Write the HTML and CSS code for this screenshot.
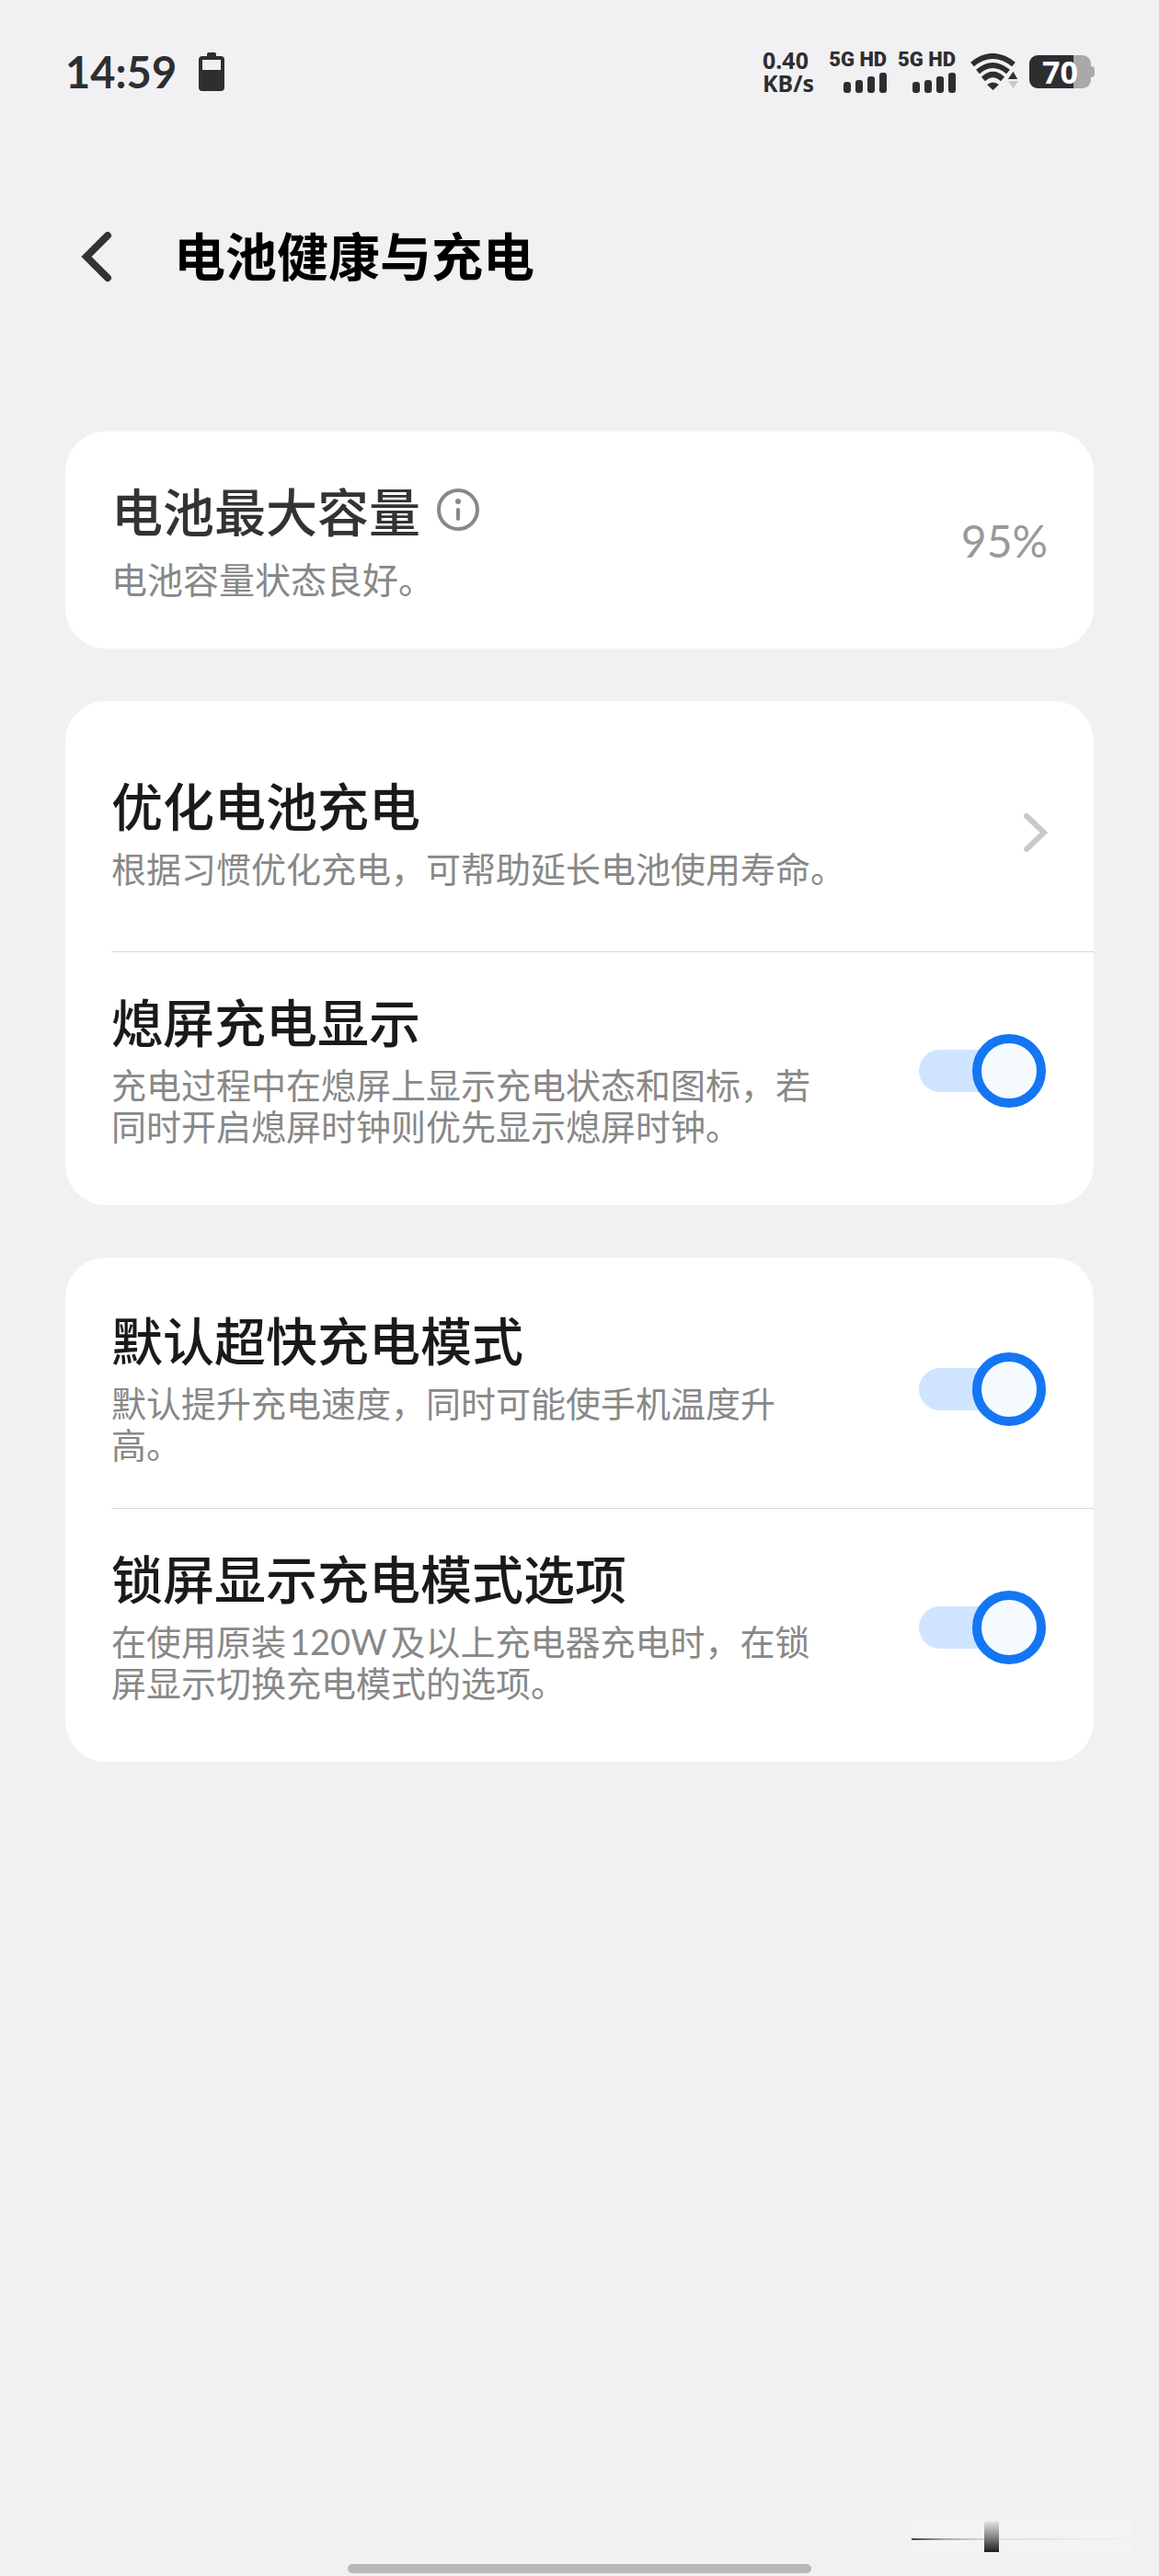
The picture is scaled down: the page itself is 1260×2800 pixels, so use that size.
FILE: index.html
```html
<!DOCTYPE html>
<html lang="zh-CN">
<head>
    <meta charset="UTF-8">
    <meta name="viewport" content="width=device-width, initial-scale=1.0">
    <title>电池健康与充电</title>
    <link rel="stylesheet" href="styles.css">
</head>
<body>
    <div class="screen">
        <div class="status-bar">
            <span class="clock">14:59</span>
            <svg class="charge-icon" width="28" height="42" viewBox="0 0 28 42" aria-hidden="true">
                <path fill="#2e2e30" fill-rule="evenodd" d="M9 4V2Q9 0 11 0H17Q19 0 19 2V4H24Q28 4 28 8V38Q28 42 24 42H4Q0 42 0 38V8Q0 4 4 4ZM4 8V19H24V8Z"/>
            </svg>
            <div class="net-speed"><span>0.40</span><span>KB/s</span></div>
            <div class="sim">
                <span>5G HD</span>
                <svg width="47" height="22" viewBox="0 0 47 22" fill="#2e2e30" aria-hidden="true">
                    <rect x="0" y="10" width="8" height="12" rx="3"/>
                    <rect x="13" y="8" width="8" height="14" rx="3"/>
                    <rect x="26" y="4" width="8" height="18" rx="3"/>
                    <rect x="39" y="0" width="8" height="22" rx="3"/>
                </svg>
            </div>
            <div class="sim">
                <span>5G HD</span>
                <svg width="47" height="22" viewBox="0 0 47 22" fill="#2e2e30" aria-hidden="true">
                    <rect x="0" y="10" width="8" height="12" rx="3"/>
                    <rect x="13" y="8" width="8" height="14" rx="3"/>
                    <rect x="26" y="4" width="8" height="18" rx="3"/>
                    <rect x="39" y="0" width="8" height="22" rx="3"/>
                </svg>
            </div>
            <svg class="wifi" width="52" height="40" viewBox="0 0 52 40" aria-hidden="true">
                <g fill="none" stroke="#2e2e30" stroke-width="6">
                    <path d="M2 12Q24 -6 47 12"/>
                    <path d="M8 20Q24 6 41 20"/>
                    <path d="M14 28Q24.500 18 35 28"/>
                </g>
                <path fill="#2e2e30" d="M18 34Q24.500 29 31 34L24.500 40Z"/>
                <path fill="#2e2e30" stroke="#f1f1f3" stroke-width="1" d="M40 28.500L46.500 19L52 28.500Z"/>
                <path fill="#c9c9cb" d="M41 30H52L46.500 38.500Z"/>
            </svg>
            <div class="battery"><span>70</span></div>
        </div>

        <header class="page-header">
            <button class="back" type="button" aria-label="返回">
                <svg width="34" height="54" viewBox="0 0 34 54" fill="none" stroke="#333335" stroke-width="8" aria-hidden="true">
                    <path stroke-linejoin="miter" stroke-linecap="round" d="M29 4L6 27L29 50"/>
                </svg>
            </button>
            <h1>电池健康与充电</h1>
        </header>

        <main class="cards">
            <section class="card">
                <div class="row capacity">
                    <div class="text">
                        <h2>电池最大容量
                            <svg width="46" height="46" viewBox="0 0 46 46" aria-hidden="true">
                                <circle cx="23" cy="23" r="21" fill="none" stroke="#888" stroke-width="4"/>
                                <circle cx="23" cy="14" r="3" fill="#888"/>
                                <path stroke="#888" stroke-width="4" stroke-linecap="round" d="M23 23V33"/>
                            </svg>
                        </h2>
                        <p>电池容量状态良好。</p>
                    </div>
                    <span class="value">95%</span>
                </div>
            </section>

            <section class="card">
                <a class="row link" href="#optimize">
                    <div class="text">
                        <h2>优化电池充电</h2>
                        <p>根据习惯优化充电，可帮助延长电池使用寿命。</p>
                    </div>
                    <svg width="26" height="42" viewBox="0 0 26 42" fill="none" stroke="#c9c9c9" stroke-width="6" stroke-linecap="round" aria-hidden="true">
                        <path d="M3 3L22 21L3 39"/>
                    </svg>
                </a>
                <label class="row" for="aod">
                    <div class="text">
                        <h2>熄屏充电显示</h2>
                        <p>充电过程中在熄屏上显示充电状态和图标，若同时开启熄屏时钟则优先显示熄屏时钟。</p>
                    </div>
                    <input class="switch" type="checkbox" id="aod" checked>
                </label>
            </section>

            <section class="card">
                <label class="row fast" for="fast">
                    <div class="text">
                        <h2>默认超快充电模式</h2>
                        <p>默认提升充电速度，同时可能使手机温度升高。</p>
                    </div>
                    <input class="switch" type="checkbox" id="fast" checked>
                </label>
                <label class="row" for="lock">
                    <div class="text">
                        <h2>锁屏显示充电模式选项</h2>
                        <p>在使用原装<span class="watt">120W</span>及以上充电器充电时，在锁屏显示切换充电模式的选项。</p>
                    </div>
                    <input class="switch" type="checkbox" id="lock" checked>
                </label>
            </section>
        </main>

        <footer class="bottom">
            <svg class="mark" width="240" height="38" viewBox="0 0 240 38" aria-hidden="true">
                <defs>
                    <linearGradient id="fadeX">
                        <stop offset="0" stop-color="#444"/>
                        <stop offset="0.150" stop-color="#a8a8a8"/>
                        <stop offset="0.350" stop-color="#dededf"/>
                        <stop offset="1" stop-color="#f1f1f3"/>
                    </linearGradient>
                    <linearGradient id="fadeY" x2="0" y2="1">
                        <stop offset="0" stop-color="#e6e6e6"/>
                        <stop offset="0.500" stop-color="#888"/>
                        <stop offset="1" stop-color="#1c1c1c"/>
                    </linearGradient>
                </defs>
                <rect width="240" height="38" fill="#f3f3f4"/>
                <rect y="22" width="240" height="2" fill="url(#fadeX)"/>
                <rect x="79" y="3" width="16" height="34" fill="url(#fadeY)"/>
            </svg>
            <div class="home-bar"></div>
        </footer>
    </div>
</body>
</html>
```
FILE: styles.css
```css
*,
*::before,
*::after {
    box-sizing: border-box;
}
body {
    margin: 0;
    background: #f1f1f3;
    color: #1a1a1a;
    font-family: "Noto Sans CJK SC", sans-serif;
}
h1, h2, p {
    margin: 0;
}
svg {
    display: block;
    flex: none;
}
.screen {
    display: flex;
    flex-direction: column;
    min-height: 100vh;
}

/* status bar */
.status-bar {
    display: flex;
    align-items: center;
    height: 156px;
    padding: 0 70px 0 71px;
    color: #2e2e30;
}
.clock {
    font: 700 47px/56px Lato, sans-serif;
}
.charge-icon {
    margin-left: 24px;
}
.net-speed {
    display: flex;
    flex-direction: column;
    margin-left: auto;
    font: 700 25px/25px "Noto Sans", sans-serif;
}
.sim {
    display: flex;
    flex-direction: column;
    align-items: flex-end;
    gap: 4px;
    margin-left: 12px;
    font: 900 22px/20px Roboto, sans-serif;
}
.net-speed + .sim {
    margin-left: 16px;
}
.wifi {
    margin-left: 16px;
}
.battery {
    display: flex;
    align-items: center;
    margin-left: 12px;
}
.battery span {
    width: 67px;
    height: 36px;
    border-radius: 9px;
    background: linear-gradient(90deg, #2e2e30 48px, #a9a9ab 48px);
    color: #fff;
    text-align: center;
    font: 700 34px/36px "Noto Sans", sans-serif;
}
.battery::after {
    content: "";
    width: 4px;
    height: 12px;
    border-radius: 0 4px 4px 0;
    background: #a9a9ab;
}

/* title */
.page-header {
    display: flex;
    align-items: center;
    gap: 67px;
    height: 240px;
    padding: 0 88px;
    margin-bottom: 73px;
}
.back {
    padding: 6px 0 0;
    border: none;
    background: none;
    cursor: pointer;
}
h1 {
    color: #000;
    font-size: 56px;
    font-weight: 700;
    line-height: 60px;
}

/* cards */
.cards {
    display: flex;
    flex-direction: column;
    gap: 57px;
    padding: 0 71px;
}
.card {
    border-radius: 44px;
    background: #fff;
}
.row {
    display: flex;
    align-items: center;
    justify-content: space-between;
    gap: 100px;
    margin-left: 50px;
    padding: 44px 52px 65px 0;
    color: inherit;
    text-decoration: none;
}
.row + .row {
    border-top: 1px solid #d6d6d8;
}
.row.capacity {
    padding: 55px 50px 54px 0;
}
.row.link {
    padding: 82px 50px 69px 0;
}
.row.fast {
    padding: 58px 52px 48px 0;
}
.text {
    display: flex;
    flex-direction: column;
    gap: 16px;
}
h2 {
    display: flex;
    align-items: center;
    gap: 18px;
    font-size: 56px;
    font-weight: 500;
    line-height: 60px;
}
p {
    color: #888;
    font-size: 38px;
    line-height: 45px;
}
.capacity .text {
    gap: 22px;
}
.capacity h2 {
    color: #333;
}
.capacity p {
    font-size: 39px;
}
.watt {
    margin: 0 4px;
    font-family: Lato, sans-serif;
    line-height: 1;
}
.value {
    color: #999;
    font: 400 48px/56px Lato, sans-serif;
}

/* switch */
.switch {
    appearance: none;
    display: grid;
    flex: none;
    align-items: center;
    width: 138px;
    height: 80px;
    margin: 4px 0 0;
    cursor: pointer;
}
.switch::before,
.switch::after {
    content: "";
    grid-area: 1 / 1;
}
.switch::before {
    width: 110px;
    height: 46px;
    border-radius: 23px;
    background: #e4e4e6;
}
.switch::after {
    width: 80px;
    height: 80px;
    border: 10px solid #b8b8ba;
    border-radius: 50%;
    background: #f5faff;
}
.switch:checked::before {
    background: #cfe4ff;
}
.switch:checked::after {
    justify-self: end;
    border-color: #1476f2;
}

/* bottom edge */
.bottom {
    display: flex;
    flex-direction: column;
    align-items: center;
    gap: 12px;
    margin-top: auto;
    padding-bottom: 3px;
}
.mark {
    align-self: flex-end;
    margin-right: 29px;
}
.home-bar {
    width: 40%;
    height: 10px;
    border-radius: 5px;
    background: #b8b8b9;
}
```
